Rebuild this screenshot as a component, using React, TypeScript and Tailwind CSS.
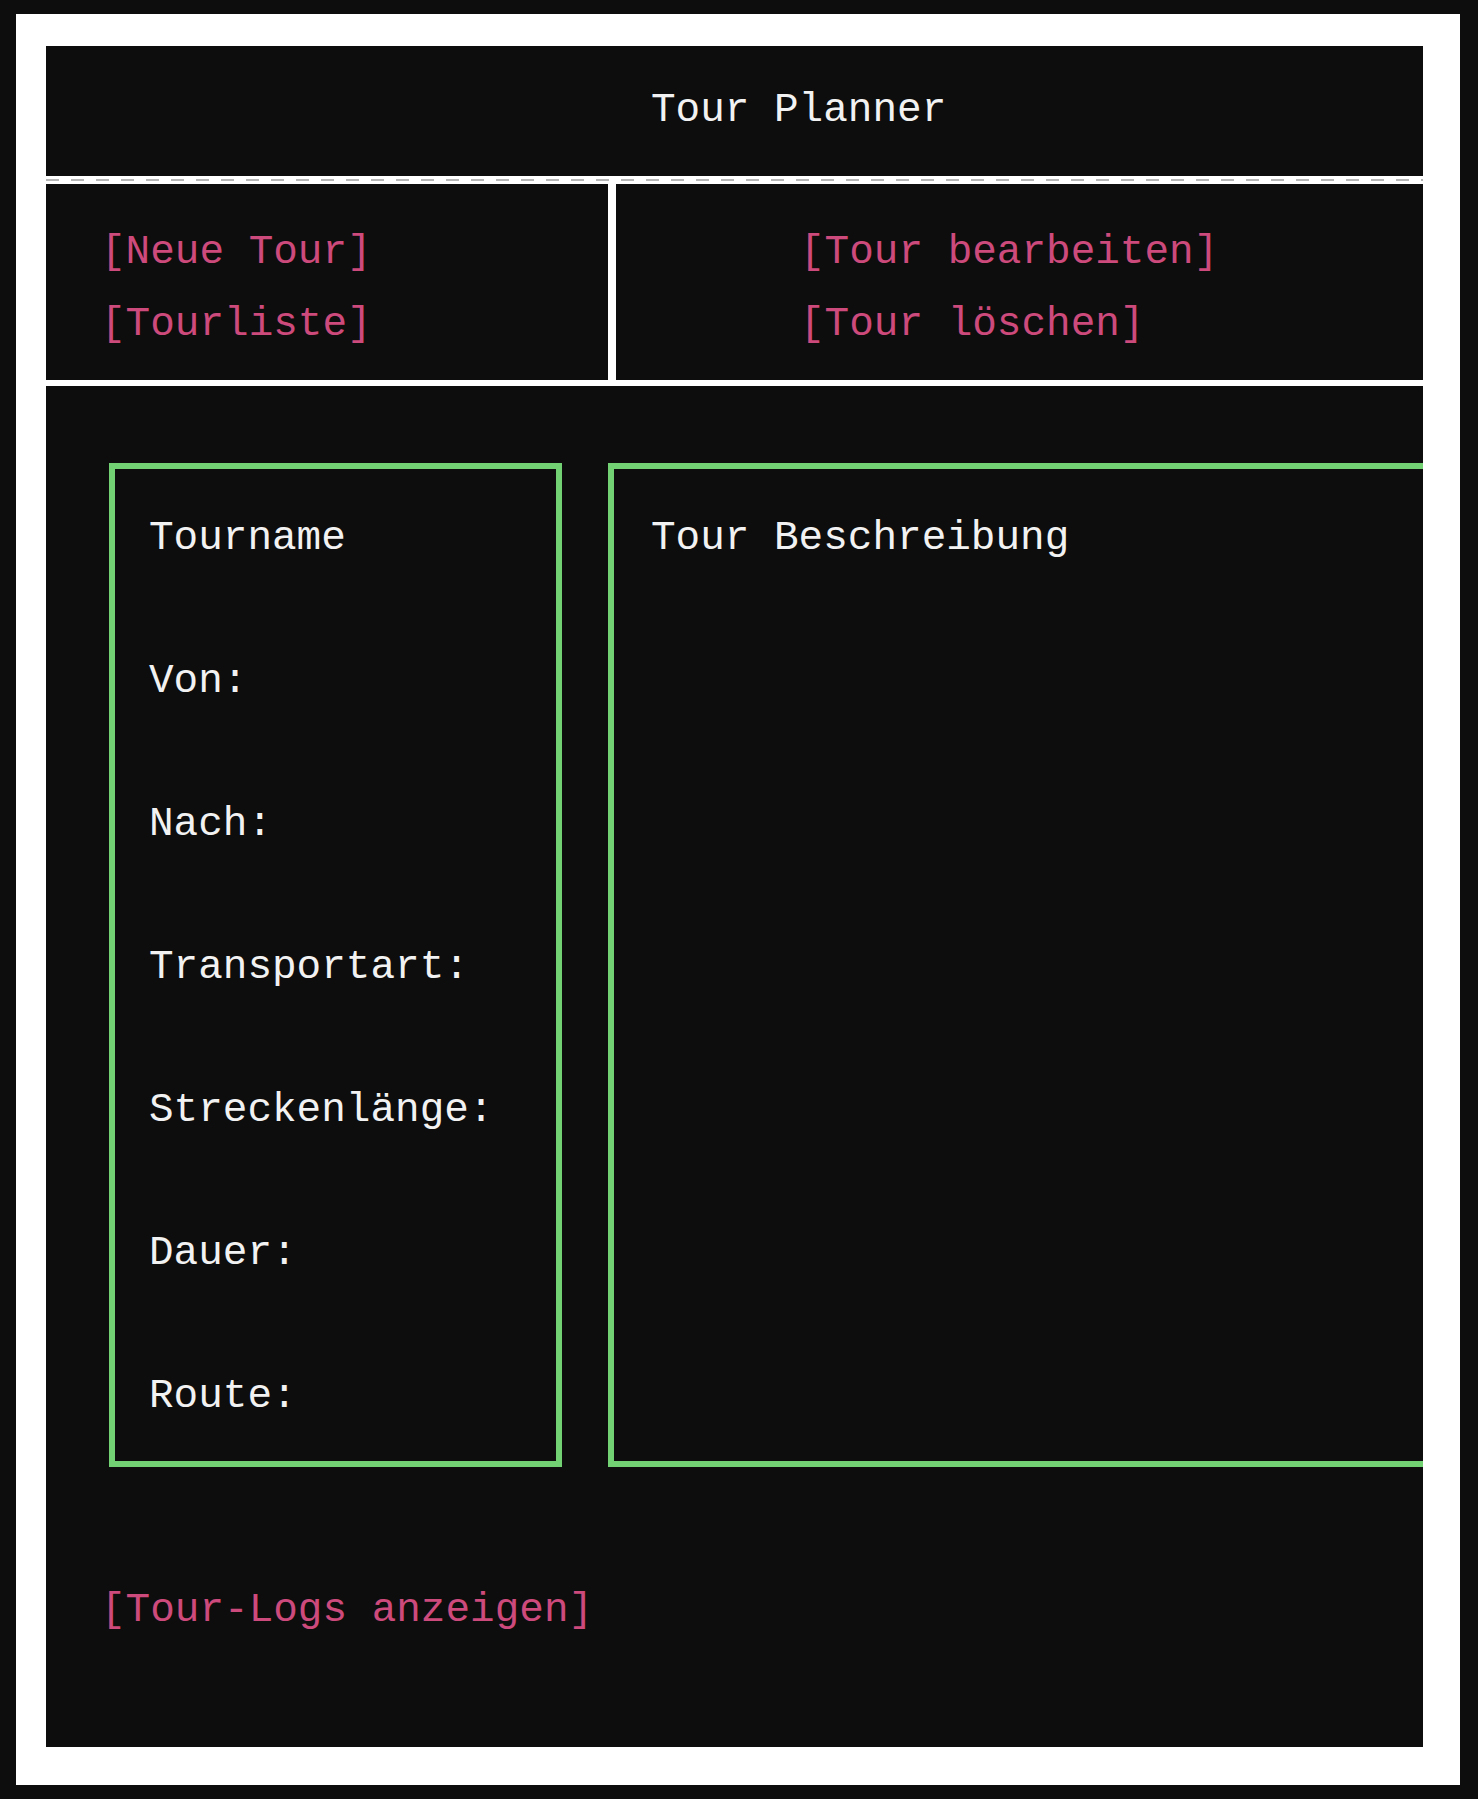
import React from 'react'

const mono = { fontFamily: '"Liberation Mono", "DejaVu Sans Mono", monospace' }

const fields = ['Tourname', 'Von:', 'Nach:', 'Transportart:', 'Streckenlänge:', 'Dauer:', 'Route:']

const Link: React.FC<{ label: string }> = ({ label }) => (
  <div className="text-[41px] leading-[49px] text-[#cd4a7c]">[{label}]</div>
)

const App: React.FC = () => {
  return (
    <div className="min-h-[1799px] w-full bg-[#0d0d0d] pt-[14px] pl-[16px]" style={mono}>
      <div className="w-[1444px] h-[1771px] bg-white pt-[32px] pl-[30px] pr-[37px] pb-[38px]">
        <div className="flex flex-col h-full bg-[#0d0d0d]">
          {/* header */}
          <div className="h-[130px] flex items-center pl-[605px] text-[41px] text-[#f2f2f2]">Tour Planner</div>
          <div className="h-[8px] bg-white flex items-center">
            <div className="w-full h-[2px] bg-[repeating-linear-gradient(90deg,#b5b5b5_0_13px,transparent_13px_25px)]" />
          </div>

          {/* actions */}
          <div className="h-[196px] flex">
            <div className="w-[562px] flex flex-col justify-center gap-[23px] pl-[55px] pt-[13px]">
              <Link label="Neue Tour" />
              <Link label="Tourliste" />
            </div>
            <div className="w-[8px] bg-white" />
            <div className="flex-1 flex flex-col justify-center gap-[23px] pl-[184px] pt-[13px]">
              <Link label="Tour bearbeiten" />
              <Link label="Tour löschen" />
            </div>
          </div>
          <div className="h-[6px] bg-white" />

          {/* details */}
          <div className="flex-1 flex flex-col">
            <div className="flex pt-[77px] pl-[63px]">
              <div className="w-[453px] h-[1004px] border-[6px] border-[#72d172] pl-[34px] pt-[45px] flex flex-col gap-[94px]">
                {fields.map((f) => (
                  <div key={f} className="text-[41px] leading-[49px] text-[#f2f2f2]">
                    {f}
                  </div>
                ))}
              </div>
              <div className="w-[46px]" />
              <div className="flex-1 h-[1004px] border-[6px] border-r-0 border-[#72d172] pl-[37px] pt-[45px]">
                <div className="text-[41px] leading-[49px] text-[#f2f2f2]">Tour Beschreibung</div>
              </div>
            </div>
            <div className="pl-[55px] pt-[119px]">
              <Link label="Tour-Logs anzeigen" />
            </div>
          </div>
        </div>
      </div>
    </div>
  )
}

export default App
